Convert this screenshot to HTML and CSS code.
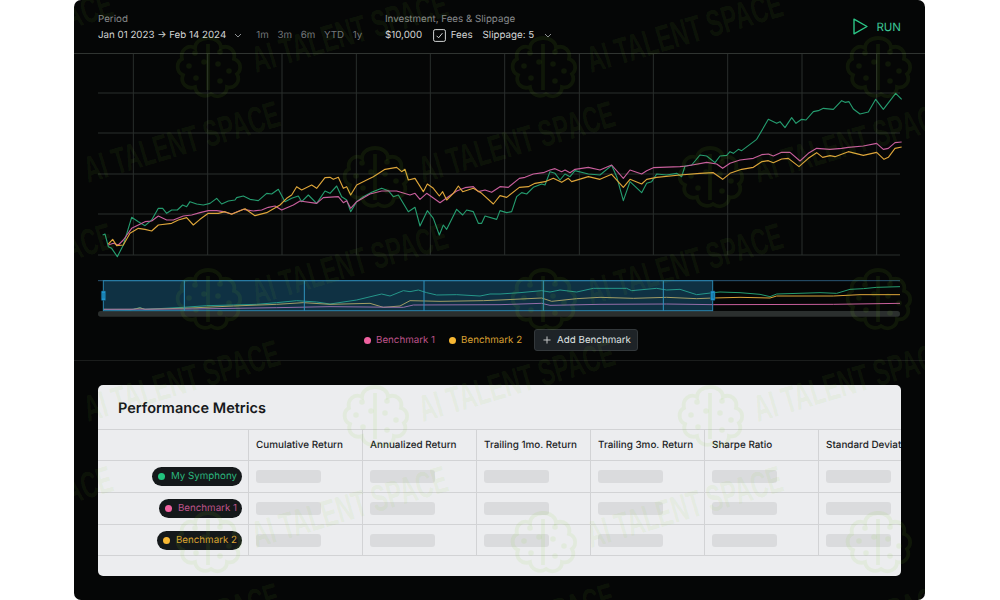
FILE: index.html
```html
<!DOCTYPE html>
<html lang="en">
<head>
<meta charset="utf-8">
<title>Backtest</title>
<link rel="stylesheet" href="styles.css">
</head>
<body>
<main class="panel">
  <header class="toolbar">
    <div class="group group-period">
      <div class="label">Period</div>
      <div class="controls">
        <span class="value">Jan 01 2023 → Feb 14 2024</span>
        <svg class="chev chev-period" viewBox="0 0 8 5"><path d="M1 1l3 3 3-3"/></svg>
        <span class="ranges"><span>1m</span><span>3m</span><span>6m</span><span>YTD</span><span>1y</span></span>
      </div>
    </div>
    <div class="group group-invest">
      <div class="label">Investment, Fees &amp; Slippage</div>
      <div class="controls">
        <span class="value">$10,000</span>
        <svg class="check" viewBox="0 0 13 13"><rect x=".6" y=".6" width="11.8" height="11.8" rx="1.6"/><path d="M3.6 6.8l2 2 3.8-4.6"/></svg>
        <span class="value fees">Fees</span>
        <span class="value slippage">Slippage: 5</span>
        <svg class="chev chev-slip" viewBox="0 0 8 5"><path d="M1 1l3 3 3-3"/></svg>
      </div>
    </div>
    <div class="run">
      <svg class="run-icon" viewBox="0 0 15 17"><path d="M1 1.2v14.6L14 8.5z"/></svg>
      <span>RUN</span>
    </div>
  </header>

  <svg class="chart" viewBox="-48 -228 2553 663">
    <g class="grid">
      <path d="M24 -111H2430M24 9H2430M24 132H2430M24 252H2430M24 375H2430"/>
      <path d="M130 -228V375M353 -228V375M576 -228V375M799 -228V375M1021 -228V375M1244 -228V375M1468 -228V375M1690 -228V375M1913 -228V375M2136 -228V375M2360 -228V375"/>
    </g>
    <polyline class="line l-green" points="38,315 45,312 55,350 65,355 82,380 100,345 125,262 145,275 165,287 185,270 205,235 218,235 230,250 245,240 262,240 278,225 290,230 300,215 320,222 340,225 360,220 380,205 395,222 415,213 435,210 440,203 460,198 480,208 505,212 530,190 545,192 565,178 585,215 605,205 625,198 635,215 655,195 680,220 705,183 720,190 740,168 755,200 770,210 782,245 800,215 820,200 845,187 875,175 895,182 910,200 925,195 955,245 975,232 990,288 1012,242 1030,265 1048,315 1060,285 1070,298 1100,238 1118,255 1130,240 1150,245 1165,280 1175,280 1185,258 1220,268 1230,242 1250,248 1265,245 1280,200 1295,188 1310,192 1330,172 1355,162 1365,165 1380,125 1395,130 1410,150 1425,132 1440,140 1455,122 1495,132 1530,135 1565,106 1580,140 1600,212 1620,155 1655,188 1670,160 1685,155 1700,132 1730,135 1760,130 1775,140 1785,108 1805,105 1830,75 1850,78 1875,98 1890,78 1910,76 1920,65 1930,70 1945,58 1955,62 2000,28 2035,-32 2060,-20 2070,-25 2085,-7 2105,-37 2118,-20 2135,-32 2148,-30 2170,-55 2185,-58 2200,-65 2230,-62 2255,-88 2265,-83 2277,-85 2290,-63 2310,-48 2335,-54 2357,-92 2380,-62 2417,-110 2435,-92"/>
    <polyline class="line l-pink" points="55,345 70,340 85,345 100,330 125,295 145,285 165,275 185,273 205,258 230,270 250,270 280,258 305,255 330,248 355,242 380,242 400,245 425,252 460,238 490,243 515,240 535,232 555,228 575,240 610,225 630,213 680,220 700,203 745,200 760,218 770,212 782,235 800,215 840,192 875,183 920,183 960,195 975,190 990,208 1010,190 1050,218 1075,200 1100,183 1125,173 1150,170 1165,185 1185,180 1205,187 1230,170 1255,172 1288,145 1305,142 1330,132 1360,128 1380,120 1395,116 1415,125 1425,120 1440,128 1455,118 1495,112 1530,120 1565,105 1600,145 1620,120 1655,132 1670,122 1690,113 1770,110 1790,108 1850,97 1880,102 1898,115 1920,100 1950,90 1990,85 2015,74 2035,72 2050,78 2075,67 2100,67 2130,93 2155,70 2180,55 2220,58 2255,55 2275,52 2320,48 2360,40 2380,58 2395,55 2415,38 2435,36"/>
    <polyline class="line l-yellow" points="55,342 68,328 80,347 100,345 120,310 145,295 165,298 185,303 205,285 245,280 265,270 290,263 310,285 330,268 355,250 385,250 405,245 425,253 465,236 495,257 530,248 570,225 590,205 605,195 620,170 635,180 665,165 680,175 705,143 720,142 730,148 745,142 760,175 770,170 782,195 800,165 830,150 850,140 885,118 920,112 935,125 945,118 955,150 975,145 1000,185 1012,162 1030,175 1048,198 1058,185 1070,210 1090,190 1105,168 1118,185 1150,175 1175,190 1210,222 1230,197 1250,202 1288,172 1315,170 1335,160 1365,155 1390,145 1415,157 1435,145 1445,155 1495,140 1530,148 1565,133 1600,172 1620,148 1655,162 1670,148 1700,142 1770,135 1830,130 1870,128 1898,148 1920,130 1955,118 1990,112 2015,95 2035,92 2050,98 2075,87 2095,85 2127,110 2155,85 2180,68 2198,82 2220,77 2235,80 2275,65 2320,76 2360,67 2382,88 2395,82 2415,55 2435,51"/>
  </svg>

  <svg class="navigator" viewBox="-48 15 2553 132">
    <rect class="nav-track" x="24" y="123" width="2406" height="17" rx="8"/>
    <path class="nav-top" d="M24 32H2430"/>
    <polyline class="line-thin l-green" points="40,118 120,120 150,113 165,118 280,112 350,107 430,105 500,103 560,98 620,92 680,96 720,102 800,90 875,72 900,78 940,62 960,65 985,60 1010,68 1040,75 1100,74 1170,78 1200,72 1230,72 1290,68 1355,62 1380,66 1410,60 1460,66 1510,55 1610,55 1625,62 1700,55 1730,60 1770,58 1820,74 1870,68 1890,66 1950,68 2010,73 2040,80 2060,72 2190,68 2240,70 2280,58 2320,56 2360,52 2430,50"/>
    <polyline class="line-thin l-yellow" points="40,118 130,118 150,114 165,118 300,114 430,108 560,103 640,98 720,103 840,100 880,112 930,108 960,92 1050,94 1180,92 1230,90 1355,84 1385,94 1460,86 1530,82 1630,85 1730,82 1820,86 1870,84 1950,82 2040,84 2060,78 2230,78 2310,74 2430,74"/>
    <polyline class="line-thin l-pink" points="40,118 300,117 560,113 720,110 940,112 970,105 1230,104 1355,100 1380,106 1530,103 1730,102 1870,104 2230,103 2430,100"/>
    <rect class="nav-sel" x="40" y="32" width="1828" height="90"/>
    <path class="nav-ticks" d="M283 32V122M643 32V122M1002 32V122M1360 32V122M1720 32V122"/>
    <g class="nav-handle">
      <rect x="34" y="63" width="13" height="28" rx="2"/>
      <path d="M38.5 68V86M42.5 68V86"/>
      <rect x="1862" y="63" width="13" height="28" rx="2"/>
      <path d="M1866.5 68V86M1870.5 68V86"/>
    </g>
  </svg>

  <div class="legend">
    <span class="series pink"><i class="dot"></i>Benchmark 1</span>
    <span class="series yellow"><i class="dot"></i>Benchmark 2</span>
    <button class="add" type="button">
      <svg class="plus" viewBox="0 0 9 9"><path d="M4.5 .5v8M.5 4.5h8"/></svg>
      Add Benchmark
    </button>
  </div>

  <section class="metrics">
    <div class="card">
      <h2 class="card-title">Performance Metrics</h2>
      <div class="table">
        <div class="row row-head">
          <div class="cell cell-name"></div>
          <div class="cell">Cumulative Return</div>
          <div class="cell">Annualized Return</div>
          <div class="cell">Trailing 1mo. Return</div>
          <div class="cell">Trailing 3mo. Return</div>
          <div class="cell">Sharpe Ratio</div>
          <div class="cell cell-last">Standard Deviation</div>
        </div>
        <div class="row">
          <div class="cell cell-name"><span class="pill green"><i class="dot"></i>My Symphony</span></div>
          <div class="cell"><i class="skel"></i></div><div class="cell"><i class="skel"></i></div><div class="cell"><i class="skel"></i></div><div class="cell"><i class="skel"></i></div><div class="cell"><i class="skel"></i></div><div class="cell cell-last"><i class="skel"></i></div>
        </div>
        <div class="row">
          <div class="cell cell-name"><span class="pill pink"><i class="dot"></i>Benchmark 1</span></div>
          <div class="cell"><i class="skel"></i></div><div class="cell"><i class="skel"></i></div><div class="cell"><i class="skel"></i></div><div class="cell"><i class="skel"></i></div><div class="cell"><i class="skel"></i></div><div class="cell cell-last"><i class="skel"></i></div>
        </div>
        <div class="row">
          <div class="cell cell-name"><span class="pill yellow"><i class="dot"></i>Benchmark 2</span></div>
          <div class="cell"><i class="skel"></i></div><div class="cell"><i class="skel"></i></div><div class="cell"><i class="skel"></i></div><div class="cell"><i class="skel"></i></div><div class="cell"><i class="skel"></i></div><div class="cell cell-last"><i class="skel"></i></div>
        </div>
      </div>
    </div>
  </section>

  <svg class="watermark" viewBox="0 0 851 600" aria-hidden="true">
    <defs>
      <symbol id="wm" overflow="visible">
        <g class="wm-logo">
          <path d="M0 -30C-8 -30 -13 -25 -13 -20C-20 -24 -28 -18 -26 -9C-32 -6 -32 4 -25 7C-28 15 -21 22 -13 19C-12 27 -3 30 3 26C10 31 19 27 19 19C27 21 33 13 29 6C34 2 33 -7 26 -9C28 -17 21 -24 13 -20C13 -26 7 -30 0 -30Z"/>
          <path d="M0 -24V22"/>
          <circle class="wm-dot" cx="-13" cy="-15" r="2.8"/><circle class="wm-dot" cx="12" cy="-16" r="2.8"/><circle class="wm-dot" cx="-19" cy="-2" r="2.8"/><circle class="wm-dot" cx="10" cy="-4" r="2.8"/><circle class="wm-dot" cx="21" cy="3" r="2.8"/><circle class="wm-dot" cx="-12" cy="10" r="2.8"/><circle class="wm-dot" cx="12" cy="13" r="2.8"/><circle class="wm-dot" cx="-4" cy="-6" r="2.8"/>
        </g>
        <text class="wm-text" transform="translate(48 5) rotate(-16.5) scale(.64 1.04)">AI TALENT SPACE</text>
      </symbol>
    </defs>
    <use href="#wm" x="-201" y="68"/><use href="#wm" x="134" y="68"/><use href="#wm" x="469" y="68"/><use href="#wm" x="804" y="68"/>
    <use href="#wm" x="-34" y="178"/><use href="#wm" x="301" y="178"/><use href="#wm" x="636" y="178"/>
    <use href="#wm" x="-201" y="300"/><use href="#wm" x="134" y="300"/><use href="#wm" x="469" y="300"/><use href="#wm" x="804" y="300"/>
    <use href="#wm" x="-34" y="417"/><use href="#wm" x="301" y="417"/><use href="#wm" x="636" y="417"/>
    <use href="#wm" x="-201" y="543"/><use href="#wm" x="134" y="543"/><use href="#wm" x="469" y="543"/><use href="#wm" x="804" y="543"/>
    <use href="#wm" x="-34" y="660"/><use href="#wm" x="301" y="660"/><use href="#wm" x="636" y="660"/>
  </svg>
</main>
</body>
</html>
```

FILE: styles.css
```css
* { box-sizing: border-box; }
html, body { margin: 0; padding: 0; background: #fff; }
body { font-family: Inter, "Liberation Sans", sans-serif; font-size: 9.75px; text-rendering: geometricPrecision; }

.panel {
  position: relative;
  width: 851px;
  height: 600px;
  margin-left: 74px;
  background: #050606;
  border-radius: 7px;
  overflow: hidden;
}

/* toolbar */
.toolbar {
  display: flex;
  align-items: flex-start;
  height: 54px;
  padding: 13px 24px 0;
  border-bottom: 1px solid #303431;
}
.group { display: flex; flex-direction: column; }
.group-period { width: 287px; }
.label { font-size: 9.75px; line-height: 13px; color: #85888a; }
.controls { display: flex; align-items: center; height: 18px; }
.value { font-size: 9.75px; color: #d2d4d4; white-space: nowrap; }
.ranges { display: flex; gap: 8.7px; margin-left: 14px; color: #74777a; font-size: 9.75px; }
.ranges span { display: block; }
.chev { width: 8px; height: 5px; fill: none; stroke: #8b8e90; stroke-width: 1; }
.chev-period { margin-left: 8px; }
.chev-slip { margin-left: 10px; }
.check { width: 13px; height: 13px; margin-left: 10.5px; fill: none; stroke: #d2d4d4; stroke-width: 1; }
.fees { margin-left: 5px; }
.slippage { margin-left: 10px; }
.run {
  display: flex;
  align-items: center;
  gap: 8px;
  margin-left: auto;
  margin-top: 5px;
  font-size: 11.5px;
  color: #3cc795;
}
.run-icon { width: 15px; height: 17px; fill: none; stroke: #2bc586; stroke-width: 1.4; stroke-linejoin: round; }

/* chart */
.chart { display: block; width: 851px; height: 221px; }
.grid path { fill: none; stroke: #2a2e2c; stroke-width: 3; }
.line { fill: none; stroke-width: 3.4; stroke-linejoin: round; }
.line-thin { fill: none; stroke-width: 3; stroke-linejoin: round; }
.l-green { stroke: #259c6f; }
.l-pink { stroke: #c85f9c; }
.l-yellow { stroke: #dda53a; }

.navigator { display: block; width: 851px; height: 44px; }
.nav-track { fill: #2b2f2e; }
.nav-top { stroke: #2a5674; stroke-width: 3; fill: none; }
.nav-sel { fill: rgba(36, 140, 195, .32); stroke: #2a84ad; stroke-width: 3; }
.nav-ticks { stroke: #2f93bf; stroke-width: 3; fill: none; }
.nav-handle rect { fill: #22a0dc; stroke: #124f6e; stroke-width: 2; }
.nav-handle path { stroke: #0f5c82; stroke-width: 2; fill: none; }

/* legend */
.legend {
  display: flex;
  align-items: center;
  box-sizing: content-box;
  height: 22px;
  padding: 10px 0 9px 290px;
  border-bottom: 1px solid #1b1d1c;
}
.series { display: inline-flex; align-items: center; gap: 5px; font-size: 9.75px; }
.legend .pink { margin-right: 14px; }
.legend .yellow { margin-right: 12px; }
.dot { display: block; width: 7px; height: 7px; border-radius: 50%; flex: none; }
.pink { color: #bd5389; }
.pink .dot { background: #f0619f; }
.yellow { color: #d9a032; }
.yellow .dot { background: #f7b733; }
.green { color: #2bb57d; }
.green .dot { background: #22c37e; }
.add {
  display: inline-flex;
  align-items: center;
  gap: 6px;
  height: 22px;
  padding: 0 6px 0 8px;
  font: 9.75px Inter, "Liberation Sans", sans-serif;
  text-rendering: geometricPrecision;
  color: #dfe1e1;
  background: #1e2327;
  border: 1px solid #33383b;
  border-radius: 3px;
}
.plus { width: 8px; height: 8px; fill: none; stroke: #c9cbcb; stroke-width: 1.1; }

/* metrics */
.metrics { padding: 24px 24px 0; }
.card {
  height: 190.5px;
  background: #ecedef;
  border-radius: 5px;
  overflow: hidden;
}
.card-title {
  margin: 0;
  height: 44px;
  padding: 14.5px 20px 0;
  font-size: 14.5px;
  line-height: 18px;
  font-weight: 600;
  color: #17191b;
}
.table { border-top: 1px solid #d2d3d5; overflow: hidden; }
.row { display: flex; height: 31.7px; border-bottom: 1px solid #d2d3d5; }
.row-head { height: 31.4px; }
.cell {
  flex: 0 0 114px;
  display: flex;
  align-items: center;
  padding-left: 7px;
  font-size: 9.9px;
  font-weight: 500;
  color: #1b1d1f;
  border-right: 1px solid #d2d3d5;
  white-space: nowrap;
}
.cell-name { flex-basis: 151px; justify-content: flex-end; padding: 0 6px 0 0; }
.cell-last { border-right: 0; }
.skel { display: block; width: 65px; height: 13px; border-radius: 3px; background: #dadbdd; }
.pill {
  display: inline-flex;
  align-items: center;
  gap: 5.5px;
  height: 19px;
  padding: 0 5px 0 6px;
  font-size: 9.75px;
  font-weight: 400;
  background: #14181a;
  border-radius: 10px;
}

/* watermark */
.watermark { position: absolute; inset: 0; width: 851px; height: 600px; pointer-events: none; }
.wm-logo path { fill: none; stroke: rgba(130, 205, 40, .085); stroke-width: 3.8; }
.wm-dot { fill: rgba(130, 205, 40, .085); }
.wm-text {
  font-family: "Liberation Sans", sans-serif;
  font-weight: 700;
  font-size: 36px;
  fill: rgba(130, 205, 40, .08);
}
```
